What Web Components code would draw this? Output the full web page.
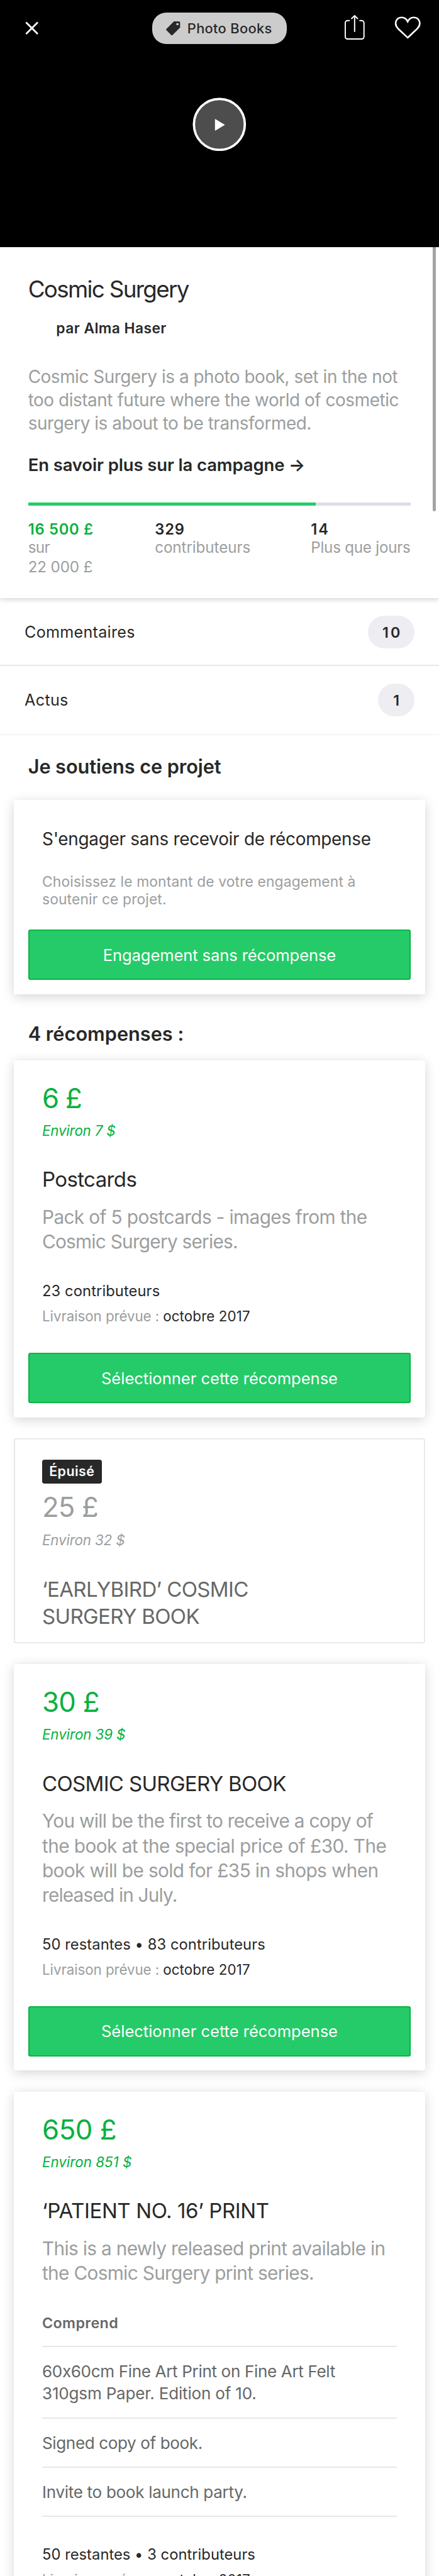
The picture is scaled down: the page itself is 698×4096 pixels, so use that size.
<!DOCTYPE html>
<html lang="fr">
<head>
<meta charset="utf-8">
<title>Cosmic Surgery</title>
<style>
/* 1rem is one hundred design units; the page is 7.5rem wide */
html{font-size:93.09px}
body{margin:0;background:#fff;font-family:Inter,"Open Sans",sans-serif;color:#282828;width:698px;height:4096px;overflow:hidden}
</style>
</head>
<body>
<project-page></project-page>
<script>
const sheet = (host, css, html) => {
  const root = host.attachShadow({mode: 'open'});
  const t = document.createElement('template');
  t.innerHTML = `<style>${css}</style>${html}`;
  root.appendChild(t.content.cloneNode(true));
  return root;
};
const define = (name, css, html) => customElements.define(name, class extends HTMLElement {
  constructor() { super(); sheet(this, css, typeof html === 'function' ? html(this) : html); }
});

/* One line of text. Its box ends on the baseline, "drop" units below the box before it;
   tracking is set so that the ink ends "w" units from the line's start. */
class KLine extends HTMLElement {
  connectedCallback() {
    if (this.shadowRoot) return;
    const a = n => this.getAttribute(n);
    const size = a('s'), weight = a('wt') || 400;
    const root = sheet(this, `
      :host{display:flex;align-items:flex-end;box-sizing:border-box;height:${a('drop') / 100}rem;
        font-size:${size / 100}rem;font-weight:${weight};font-style:${a('i') !== null ? 'italic' : 'inherit'};
        color:var(--ink-${a('c') || 'dark'});white-space:pre}
      span{line-height:1;margin-bottom:calc(-.136em - .4px)}`, '<span><slot></slot></span>');
    const span = root.querySelector('span');
    const text = this.textContent;
    if (!a('w')) return;
    const unit = parseFloat(getComputedStyle(document.documentElement).fontSize) / 100;
    const ctx = document.createElement('canvas').getContext('2d');
    ctx.font = `${a('i') !== null ? 'italic ' : ''}${weight} ${size * unit}px Inter`;
    const m = ctx.measureText(text);
    const bearing = m.width - m.actualBoundingBoxRight;
    const ink = span.getBoundingClientRect().width - bearing;
    const sp = (a('w') * unit - ink) / Math.max(1, [...text].length - 1);
    span.style.letterSpacing = sp.toFixed(3) + 'px';
    span.style.marginRight = (-sp).toFixed(3) + 'px';
  }
}

define('project-hero', `
  :host{display:block;height:4.22rem;background:#000}
  header{display:flex;align-items:flex-start;height:1.66rem;box-sizing:border-box}
  .x{width:.23rem;height:.23rem;margin:.36rem 0 0 .43rem}
  .share{width:.34rem;height:.44rem;margin:.25rem 0 0 .99rem}
  .heart{width:.46rem;height:.4rem;margin:.27rem 0 0 .506rem}
  .play{display:block;width:.92rem;height:.92rem;margin:0 auto}
  svg{display:block;flex:none}`, `
  <header>
    <svg class="x" viewBox="0 0 23 23"><path d="M1.5 1.5 21.5 21.5M21.5 1.5 1.5 21.5" stroke="#fff" stroke-width="3" fill="none"/></svg>
    <category-pill></category-pill>
    <svg class="share" viewBox="589 25 34 44" fill="none" stroke="#fff" stroke-width="2.1" stroke-linecap="round" stroke-linejoin="round"><path d="M597 35.5h-3a4 4 0 0 0-4 4V63a4 4 0 0 0 4 4h24a4 4 0 0 0 4-4V39.500a4 4 0 0 0-4-4h-3M606 54V27M601 32l5-5 5 5"/></svg>
    <svg class="heart" viewBox="674 27 46 40" fill="none" stroke="#fff" stroke-width="2.8"><path d="M696.800 64.500 680.300 49C672.500 40.500 677 30 686.600 30c5 0 8.200 3 10.200 7 2-4 5.200-7 10.200-7 9.600 0 14.100 10.500 6.300 19Z"/></svg>
  </header>
  <svg class="play" viewBox="0 0 92 92"><circle cx="46" cy="46" r="43.500" fill="#4d4d4d" stroke="#fff" stroke-width="4"/><path d="M38.500 36.500v20.500l17-10.250z" fill="#fff"/></svg>`);

define('category-pill', `
  :host{display:flex;width:2.3rem;height:.54rem;margin:.21rem 0 0 1.94rem;border-radius:.24rem;background:#ccc}
  svg{width:.24rem;height:.24rem;margin:.15rem .12rem 0 .24rem;flex:none}`, `
  <svg viewBox="0 0 24 24"><path d="M13.500 0H22a2 2 0 0 1 2 2v8.500L10.800 23.600a1.200 1.200 0 0 1-1.700 0L.4 14.900a1.200 1.200 0 0 1 0-1.700Z" fill="#282828"/><circle cx="19.500" cy="4.600" r="2" fill="#ccc"/></svg>
  <k-line drop="36.3" s="23.5" wt="500" w="143.5">Photo Books</k-line>`);

define('project-summary', `
  :host{display:block;position:relative;z-index:1;height:6rem;padding:0 .48rem;background:#fff;box-sizing:border-box;box-shadow:0 .01rem .1rem rgba(0,0,0,.22)}
  .by{padding-left:.48rem}
  .bar{height:.06rem;margin:.53rem 0 0;background:#dcdee8}
  .bar i{display:block;width:4.91rem;height:100%;background:#25cb68}
  .stats{display:grid;grid-template-columns:2.165rem 2.665rem 1fr}`, `
  <k-line drop="86" s="39.5" w="275">Cosmic Surgery</k-line>
  <div class="by"><k-line drop="61.3" s="24.5" wt="600" w="188">par Alma Haser</k-line></div>
  <k-line drop="85.7" s="30" c="soft" w="631.5">Cosmic Surgery is a photo book, set in the not</k-line>
  <k-line drop="40" s="30" c="soft" w="632.5">too distant future where the world of cosmetic</k-line>
  <k-line drop="40" s="30" c="soft" w="482">surgery is about to be transformed.</k-line>
  <k-line drop="70" s="29.500" wt="600" w="471">En savoir plus sur la campagne →</k-line>
  <div class="bar"><i></i></div>
  <div class="stats">
    <div><k-line drop="49" s="25.500" wt="600" c="green" w="110">16 500 £</k-line><k-line drop="31.700" s="26" c="soft" w="37.5">sur</k-line><k-line drop="34" s="26" c="soft" w="109.5">22 000 £</k-line></div>
    <div><k-line drop="49" s="25.500" wt="600" w="49">329</k-line><k-line drop="31.700" s="26" c="soft" w="162.5">contributeurs</k-line></div>
    <div><k-line drop="49" s="25.500" wt="600" w="29">14</k-line><k-line drop="31.700" s="26" c="soft" w="169.5">Plus que jours</k-line></div>
  </div>`);

define('count-row', `
  :host{display:flex;justify-content:space-between;align-items:flex-start;box-sizing:border-box;padding:0 .42rem;height:1.16rem}
  .badge{margin-top:.3rem;height:.56rem;border-radius:.28rem;background:#eeedf2;display:flex;justify-content:center;min-width:.62rem}
  :host([wide]) .badge{min-width:.79rem}`, `
  <slot name="label"></slot><div class="badge"><slot name="count"></slot></div>`);

define('pledge-button', `
  :host{display:flex;justify-content:center;align-items:flex-start;height:.86rem;margin:0 .24rem;border-radius:.04rem;background:#25cb68;box-shadow:inset 0 0 0 .02rem #06b13e}`,
  '<slot></slot>');

define('reward-card', `
  :host{display:block;margin:0 .24rem;padding-bottom:.24rem;border-radius:.04rem;background:#fff;box-shadow:0 .04rem .19rem rgba(0,0,0,.17)}
  :host([square]){border-radius:0}
  :host([gone]){box-shadow:inset 0 0 0 .02rem #e6e7e7;padding-bottom:.33rem}
  .in{padding:0 .48rem}`, '<div class="in"><slot></slot></div><slot name="action"></slot>');

define('sold-badge', `
  :host{display:flex;width:1.02rem;height:.41rem;border-radius:.04rem;background:#282828;padding-left:.12rem;box-sizing:border-box}`,
  '<slot></slot>');

define('delivery-line', ':host{display:flex}div{width:2.065rem}', `
  <div><k-line drop="42.300" s="24" c="soft" w="198.500">Livraison prévue :</k-line></div><k-line drop="42.300" s="24" w="148">octobre 2017</k-line>`);

define('include-item', ':host{display:block}div{height:.02rem;margin-top:.305rem;background:#e6e7e7}', '<slot></slot><div></div>');

const select = '<pledge-button slot="action"><k-line drop="53" s="27.500" c="white" w="403">Sélectionner cette récompense</k-line></pledge-button>';

define('project-page', `
  :host{display:block;position:relative;
    --ink-dark:#282828;--ink-soft:#9b9e9e;--ink-mid:#656868;--ink-green:#06b13e;--ink-white:#fff}
  .head{padding-left:.48rem}
  .rule{height:.02rem;background:#e6e7e7}.rule.faint{background:#f5f5f5}
  .gap{height:.36rem}
  .bottom{height:.54rem}
  .thumb{position:absolute;z-index:2;left:7.39rem;top:4.22rem;width:.05rem;height:4.51rem;border-radius:0 0 .03rem .03rem;background:#a3a3a3}`, `
  <project-hero></project-hero>
  <project-summary></project-summary>
  <div class="thumb"></div>
  <count-row wide style="height:1.14rem"><k-line slot="label" drop="67.300" s="27" w="187">Commentaires</k-line><k-line slot="count" drop="36.700" s="25" wt="600" w="30">10</k-line></count-row>
  <div class="rule"></div>
  <count-row><k-line slot="label" drop="67.500" s="27" w="73">Actus</k-line><k-line slot="count" drop="36.700" s="25" wt="600">1</k-line></count-row>
  <div class="rule faint"></div>
  <div class="head"><k-line drop="65.700" s="33" wt="600" w="330">Je soutiens ce projet</k-line></div>
  <div style="height:.453rem"></div>
  <reward-card square>
    <k-line drop="77.700" s="30" w="560.500">S'engager sans recevoir de récompense</k-line>
    <k-line drop="70.300" s="24.500" c="soft" w="534.500">Choisissez le montant de votre engagement à</k-line>
    <k-line drop="30" s="24.500" c="soft" w="210.500">soutenir ce projet.</k-line>
    <div style="height:.43rem"></div>
    <pledge-button slot="action"><k-line drop="53" s="27.500" c="white" w="397">Engagement sans récompense</k-line></pledge-button>
  </reward-card>
  <div class="head"><k-line drop="80" s="33" wt="600" w="264">4 récompenses :</k-line></div>
  <div style="height:.33rem"></div>

  <reward-card>
    <k-line drop="82" s="47" c="green" w="66.700">6 £</k-line>
    <k-line drop="47" s="24" i c="green" w="126">Environ 7 $</k-line>
    <k-line drop="87.700" s="35.500" w="160.500">Postcards</k-line>
    <k-line drop="63.200" s="32" c="soft" w="554">Pack of 5 postcards - images from the</k-line>
    <k-line drop="42" s="32" c="soft" w="333">Cosmic Surgery series.</k-line>
    <k-line drop="81.800" s="25.500" w="200.500">23 contributeurs</k-line>
    <delivery-line></delivery-line>
    <div class="bottom"></div>
    ${select}
  </reward-card>
  <div class="gap"></div>

  <reward-card gone>
    <div style="height:.36rem"></div>
    <sold-badge><k-line drop="29" s="23" wt="600" c="white" w="76.500">Épuisé</k-line></sold-badge>
    <k-line drop="57.700" s="47" c="soft" w="94.500">25 £</k-line>
    <k-line drop="47.400" s="24" i c="soft" w="142">Environ 32 $</k-line>
    <k-line drop="89" s="35.500" c="mid" w="351.500">‘EARLYBIRD’ COSMIC</k-line>
    <k-line drop="45.900" s="35.500" c="mid" w="269">SURGERY BOOK</k-line>
  </reward-card>
  <div class="gap"></div>

  <reward-card>
    <k-line drop="82" s="47" c="green" w="96.500">30 £</k-line>
    <k-line drop="47" s="24" i c="green" w="143">Environ 39 $</k-line>
    <k-line drop="87.700" s="35.500" w="417">COSMIC SURGERY BOOK</k-line>
    <k-line drop="63.200" s="32" c="soft" w="566">You will be the first to receive a copy of</k-line>
    <k-line drop="42" s="32" c="soft" w="587">the book at the special price of £30. The</k-line>
    <k-line drop="42" s="32" c="soft" w="573">book will be sold for £35 in shops when</k-line>
    <k-line drop="42" s="32" c="soft" w="229.500">released in July.</k-line>
    <k-line drop="81.800" s="25.500" w="380.500">50 restantes • 83 contributeurs</k-line>
    <delivery-line></delivery-line>
    <div class="bottom"></div>
    ${select}
  </reward-card>
  <div class="gap"></div>

  <reward-card>
    <k-line drop="82" s="47" c="green" w="125.300">650 £</k-line>
    <k-line drop="47" s="24" i c="green" w="153.500">Environ 851 $</k-line>
    <k-line drop="87.700" s="35.500" w="386.500">‘PATIENT NO. 16’ PRINT</k-line>
    <k-line drop="63.200" s="32" c="soft" w="585">This is a newly released print available in</k-line>
    <k-line drop="42" s="32" c="soft" w="463">the Cosmic Surgery print series.</k-line>
    <include-item><k-line drop="82" s="25" wt="600" c="mid" w="128">Comprend</k-line></include-item>
    <include-item><k-line drop="51.800" s="28" c="mid" w="503.500">60x60cm Fine Art Print on Fine Art Felt</k-line><k-line drop="38" s="28" c="mid" w="364.500">310gsm Paper. Edition of 10.</k-line></include-item>
    <include-item><k-line drop="51.500" s="28" c="mid" w="272.500">Signed copy of book.</k-line></include-item>
    <include-item><k-line drop="51.500" s="28" c="mid" w="348.500">Invite to book launch party.</k-line></include-item>
    <k-line drop="73" s="25.500" w="363.500">50 restantes • 3 contributeurs</k-line>
    <delivery-line></delivery-line>
    <div class="bottom"></div>
    ${select}
  </reward-card>`);

customElements.define('k-line', KLine);
</script>
</body>
</html>
